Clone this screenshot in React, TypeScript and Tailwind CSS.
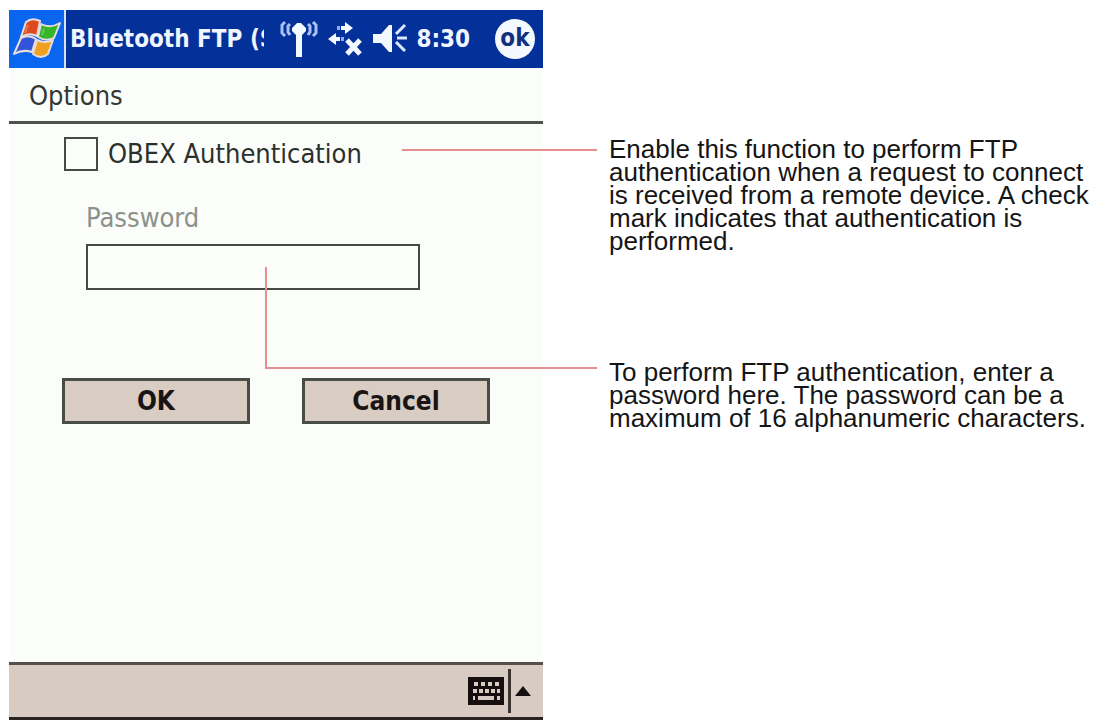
import { type ReactNode } from "react";

function WindowsFlag() {
  return (
    <svg viewBox="0 0 48 42" className="h-[42px] w-12" aria-hidden="true">
      <g stroke="#e6dcdc" strokeWidth="2" strokeLinejoin="round">
        <path d="M13 4 Q19 -1 27 3 L24 18 Q16 14 8 19 Z" fill="#dd4a22" />
        <path d="M28 6 Q37 11 47 5 L41 20 Q33 24 25 19 Z" fill="#35b52a" />
        <path d="M8 20 Q16 16 23 21 L19 34 Q10 31 1 36 Z" fill="#3354d8" />
        <path d="M24 22 Q32 26 40 22 L35 36 Q28 42 20 36 Z" fill="#f0a020" />
      </g>
      <path d="M15 7 L12 15 M31 11 L29 17" stroke="#ffffff" strokeOpacity="0.25" strokeWidth="2" />
    </svg>
  );
}

function AntennaIcon() {
  return (
    <svg viewBox="0 0 38 38" className="h-[38px] w-[38px]" fill="none" stroke="#a9c2f5" aria-hidden="true">
      <path d="M17 3 H21 L26 8 V11 L22 15 V37 H16 V15 L12 11 V8 Z" fill="#f4f8ff" stroke="none" />
      <path d="M5 2 L2 5 V13 L5 16 M10 4 L8 6 V12 L10 15 M28 4 L30 6 V12 L28 15 M33 2 L36 5 V13 L33 16" strokeWidth="3" />
    </svg>
  );
}

function ConnectionIcon() {
  return (
    <svg viewBox="0 0 36 36" className="h-9 w-9" aria-hidden="true">
      <path d="M18 1 L26 7 L18 13 V9 H14 V5 H18 Z" fill="#f4f8ff" />
      <path d="M9 12 V16 H13 V20 H9 V24 L1 18 Z" fill="#f4f8ff" />
      <path d="M10 5 H13 V9 H10 Z M14 16 H17 V20 H14 Z" fill="#8eaaf0" />
      <path d="M20 19 L33 33 M33 19 L20 33" stroke="#f4f8ff" strokeWidth="5" />
    </svg>
  );
}

function SpeakerIcon() {
  return (
    <svg viewBox="0 0 36 32" className="h-8 w-9" aria-hidden="true">
      <path d="M1 11 H9 L17 2 H20 V29 H17 L9 20 H1 Z" fill="#f4f8ff" />
      <path d="M24 11 L33 2 M25 15 H35 M24 19 L33 28" stroke="#dce8ff" strokeWidth="3" />
    </svg>
  );
}

function KeyboardIcon() {
  return (
    <svg viewBox="0 0 36 28" className="h-7 w-9" aria-hidden="true">
      <rect width="36" height="28" fill="#15100f" />
      <path d="M6 7 H31" stroke="#d8ccc2" strokeWidth="4" strokeDasharray="4 3" />
      <path d="M5 14 H32" stroke="#d8ccc2" strokeWidth="4" strokeDasharray="4 2" />
      <path d="M5 21 H7 M10 21 H26 M29 21 H32" stroke="#d8ccc2" strokeWidth="4" />
    </svg>
  );
}

function TitleBar() {
  return (
    <header className="flex h-[58px] items-center bg-[#04309a] text-2xl font-bold text-[#f0f5ff]">
      <div className="mr-1 flex h-full w-[57px] shrink-0 items-center justify-center border-r-2 border-[#d5e4fb] bg-[#0a66ee]">
        <WindowsFlag />
      </div>
      <h1 className="w-[194px] shrink-0 overflow-hidden whitespace-nowrap">Bluetooth FTP (S</h1>
      <div className="ml-4 flex flex-1 items-center justify-between pr-2">
        <AntennaIcon />
        <ConnectionIcon />
        <SpeakerIcon />
        <span>8:30</span>
        <button className="ml-4 flex h-10 w-10 items-center justify-center rounded-full bg-[#f4f8ff] pb-0.5 text-2xl text-[#12307e]">
          ok
        </button>
      </div>
    </header>
  );
}

function DialogButton({ children }: { children: ReactNode }) {
  return (
    <button className="h-[46px] w-[188px] border-3 border-[#4a4c46] bg-[#d9ccc2] text-[26px] leading-none font-bold text-[#1b1414]">
      {children}
    </button>
  );
}

function DeviceScreen() {
  return (
    <section className="mt-[10px] ml-[9px] flex w-[534px] shrink-0 flex-col bg-[#fafdf9] font-['DejaVu_Sans_Condensed','DejaVu_Sans',sans-serif] [font-stretch:condensed]">
      <TitleBar />
      <h2 className="flex h-14 items-center border-b-3 border-[#4f534e] px-5 pt-1 text-[27px] text-[#333733]">Options</h2>

      <form className="flex-1 px-[53px] pt-3" onSubmit={(e) => e.preventDefault()}>
        <div className="flex h-9 items-center gap-2.5 pl-0.5 text-[27px] text-[#2c302c]">
          <input
            id="obex"
            type="checkbox"
            className="h-[34px] w-[34px] appearance-none border-2 border-[#454a45] checked:bg-[#454a45]"
          />
          <label htmlFor="obex">OBEX Authentication</label>
        </div>

        <div className="mt-[26px] flex flex-col gap-1.5 pl-6">
          <label htmlFor="password" className="text-[27px] leading-10 text-[#8d918c]">
            Password
          </label>
          <input
            id="password"
            type="password"
            maxLength={16}
            className="h-[46px] w-[334px] border-2 border-[#454a45] bg-transparent px-2"
          />
        </div>

        <div className="mt-[88px] flex gap-[52px]">
          <DialogButton>OK</DialogButton>
          <DialogButton>Cancel</DialogButton>
        </div>
      </form>

      <footer className="flex h-[58px] items-center justify-end border-t-3 border-b-3 border-t-[#55504b] border-b-[#2b2423] bg-[#d8ccc2] pr-3">
        <button aria-label="Keyboard">
          <KeyboardIcon />
        </button>
        <div className="mx-1 h-11 w-[3px] bg-[#3a3431]" />
        <button aria-label="Input methods">
          <svg viewBox="0 0 16 10" className="h-[10px] w-4" aria-hidden="true">
            <path d="M8 0 L16 10 H0 Z" fill="#15100f" />
          </svg>
        </button>
      </footer>
    </section>
  );
}

export default function App() {
  return (
    <main className="flex min-h-screen bg-white">
      <DeviceScreen />

      <aside className="ml-[66px] flex min-w-0 flex-1 flex-col gap-[108px] pt-[138px] font-['Liberation_Sans',Arial,sans-serif] text-[26px] leading-[23px] text-[#151515]">
        <p className="relative">
          <span className="absolute top-[11px] right-full mr-3 w-[195px] border-t-2 border-[#e58f90]" />
          Enable this function to perform FTP authentication when a request to connect is received from a remote device.
          A check mark indicates that authentication is performed.
        </p>
        <p className="relative">
          {/* elbow line that starts inside the password box */}
          <span className="absolute -top-[94px] right-full mr-3 h-[102px] w-[332px] border-b-2 border-l-2 border-[#e58f90]" />
          To perform FTP authentication, enter a password here. The password can be a maximum of 16 alphanumeric
          characters.
        </p>
      </aside>
    </main>
  );
}
